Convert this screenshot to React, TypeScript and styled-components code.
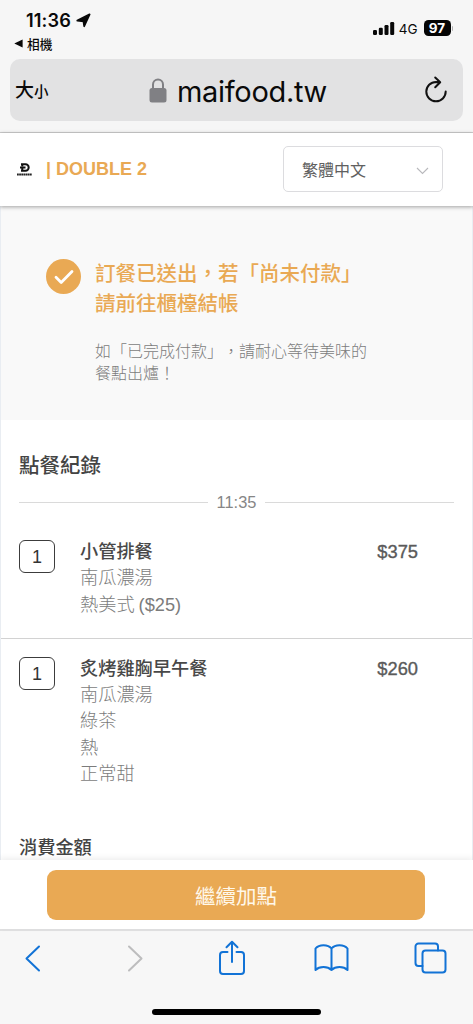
import React from "react";
import styled, { createGlobalStyle } from "styled-components";

const AMBER = "#e9a954";
const BLUE = "#1273d6";
const WEB = '"Liberation Sans", "Noto Sans CJK TC", sans-serif';
const SYSTEM = 'Inter, "Noto Sans CJK TC", sans-serif';

const Global = createGlobalStyle`
  * { box-sizing: border-box; }
  body { margin: 0; background: #f6f6f6; }
`;

const Phone = styled.div`
  width: 473px;
  height: 1024px;
  overflow: hidden;
  display: flex;
  flex-direction: column;
  background: #f6f6f6;
  font-family: ${WEB};
  text-spacing-trim: space-all;
`;

const BrowserTop = styled.header`
  height: 133px;
  flex: none;
  border-bottom: 1px solid #cfcfcf;
  font-family: ${SYSTEM};
  color: #0a0a0a;
`;

const StatusBar = styled.div`
  height: 59px;
  display: flex;
  justify-content: space-between;
  padding: 9px 20px 0 14px;
`;

const Clock = styled.div`
  display: flex;
  align-items: center;
  gap: 5px;
  height: 22px;
  padding-left: 12px;
  font-size: 18.2px;
  font-weight: 600;
  letter-spacing: 0.1px;
`;

const BackToApp = styled.div`
  display: flex;
  align-items: center;
  gap: 4px;
  height: 24px;
  font-size: 12.7px;
  font-weight: 500;
`;

const Signals = styled.div`
  display: flex;
  align-items: center;
  height: 38px;
  font-size: 13.5px;
`;

const Network = styled.span`
  margin: 1px 6px 0 4px;
`;

const Battery = styled.span`
  width: 27px;
  height: 16px;
  border-radius: 4.5px;
  background: #050505;
  color: #fff;
  font-size: 13.5px;
  font-weight: 700;
  line-height: 16px;
  text-align: center;
`;

const BatteryTip = styled.span`
  width: 1.5px;
  height: 5px;
  margin-left: 1px;
  border-radius: 0 2px 2px 0;
  background: #b0b0b0;
`;

const AddressBar = styled.div`
  height: 62px;
  margin: 0 10px;
  padding: 0 15px 0 5px;
  border-radius: 10px;
  background: #e2e2e3;
  display: flex;
  align-items: center;
  justify-content: space-between;
`;

const TextSize = styled.span`
  width: 36px;
  padding-top: 3px;
  font-size: 19px;
  font-weight: 500;
  line-height: 24px;
  white-space: nowrap;
  small { font-size: 14.5px; }
`;

const Domain = styled.div`
  display: flex;
  align-items: center;
  gap: 10px;
  padding: 3px 0 0 1px;
  font-size: 29px;
  letter-spacing: -0.3px;
  line-height: 36px;
  svg { margin-top: -3px; }
`;

const SiteHeader = styled.div`
  position: relative;
  z-index: 1;
  height: 73px;
  flex: none;
  padding: 0 30px 0 15px;
  display: flex;
  align-items: center;
  justify-content: space-between;
  background: #fff;
  box-shadow: 0 1px 4px rgba(0, 0, 0, 0.36);
`;

const Brand = styled.div`
  display: flex;
  align-items: center;
  gap: 12px;
  color: ${AMBER};
  font-size: 18px;
  font-weight: 700;
`;

const LanguageSelect = styled.button`
  width: 160px;
  height: 46px;
  margin-bottom: 1px;
  padding: 3px 13px 0 18px;
  border: 1px solid #dcdcdf;
  border-radius: 5px;
  background: #fff;
  display: flex;
  align-items: center;
  justify-content: space-between;
  color: #606060;
  font: 400 16px/24px ${WEB};
`;

const Page = styled.main`
  flex: 1;
  min-height: 0;
  overflow: hidden;
  background: #fff;
  border: solid #e9edf2;
  border-width: 0 1px;
`;

const Notice = styled.section`
  height: 214px;
  padding: 53px 45px 0 45px;
  display: flex;
  gap: 14px;
  background: #f9f9f9;
`;

const NoticeTitle = styled.h1`
  margin: 0;
  color: ${AMBER};
  font-size: 20.5px;
  font-weight: 500;
  line-height: 30px;
  white-space: nowrap;
`;

const NoticeText = styled.p`
  margin: 22px 0 0;
  color: #7c7c7c;
  font-size: 16px;
  font-weight: 300;
  line-height: 22px;
  white-space: nowrap;
`;

const NoticeIcon = styled.svg`
  flex: none;
`;

const Record = styled.section`
  padding-top: 31px;
`;

const Heading = styled.h2<{ $size: number }>`
  margin: 0 0 0 18px;
  color: #444;
  font-size: ${(p) => p.$size}px;
  font-weight: 500;
  line-height: 30px;
`;

const TimeDivider = styled.div`
  height: 24px;
  margin: 9px 18px 25px;
  display: flex;
  align-items: center;
  gap: 8.5px;
  color: #868686;
  font-size: 16.4px;
  &::before, &::after {
    content: "";
    flex: 1;
    height: 1px;
    background: #dadada;
  }
`;

const Item = styled.article<{ $divided?: boolean }>`
  display: flex;
  align-items: flex-start;
  padding: ${(p) => (p.$divided ? "17px 54px 0 18px" : "0 54px 20px 18px")};
  border-top: ${(p) => (p.$divided ? "1px solid #d2d2d2" : "0")};
`;

const Quantity = styled.span`
  width: 36px;
  height: 33px;
  margin-top: 1px;
  border: 1.5px solid #3c3c3c;
  border-radius: 6px;
  color: #333;
  font-size: 18px;
  line-height: 32px;
  text-align: center;
`;

const Details = styled.div`
  flex: 1;
  margin-left: 25px;
  color: #7c7c7c;
  font-size: 18.2px;
  font-weight: 300;
`;

const Line = styled.div`
  height: 26.3px;
  line-height: 26.3px;
  word-spacing: -1px;
`;

const Name = styled(Line)`
  color: #484848;
  font-weight: 500;
`;

const Price = styled.span`
  color: #5a5a5a;
  font-size: 18.3px;
  line-height: 26px;
  -webkit-text-stroke: 0.35px #5a5a5a;
`;

const Total = styled.section`
  padding-top: 46px;
`;

const ActionBar = styled.div`
  position: relative;
  z-index: 1;
  height: 69px;
  flex: none;
  padding: 10px 48px 0 47px;
  background: #fff;
  box-shadow: 0 -2px 6px rgba(0, 0, 0, 0.07);
`;

const OrderMore = styled.button`
  display: block;
  width: 100%;
  height: 50px;
  border: 0;
  border-radius: 9px;
  background: ${AMBER};
  color: #fff8ea;
  font: 400 20.5px/50px ${WEB};
  padding: 2px 0 0;
`;

const BrowserBottom = styled.footer`
  height: 95px;
  flex: none;
  border-top: 2px solid #e1e1e2;
  background: #f7f7f7;
  display: flex;
  flex-direction: column;
  align-items: center;
`;

const Tools = styled.nav`
  width: 100%;
  height: 54px;
  padding: 0 25px 0 15px;
  display: grid;
  grid-template-columns: repeat(5, 35px);
  align-items: center;
  justify-content: space-between;
  justify-items: center;
`;

const HomeIndicator = styled.div`
  width: 169px;
  height: 6px;
  margin-top: 24px;
  border-radius: 3px;
  background: #000;
`;

const Tool = styled.svg<{ $muted?: boolean }>`
  fill: none;
  stroke: ${(p) => (p.$muted ? "#bdbdbe" : BLUE)};
  margin-left: ${(p) => (p.$muted ? "6px" : "0")};
  stroke-width: 2;
  stroke-linecap: round;
  stroke-linejoin: round;
`;

const LogoMark = styled.span`
  width: 19px;
  display: flex;
  flex-direction: column;
  align-items: center;
  gap: 1px;
`;

const orders = [
  { name: "小管排餐", price: "$375", options: ["南瓜濃湯", "熱美式 ($25)"] },
  { name: "炙烤雞胸早午餐", price: "$260", options: ["南瓜濃湯", "綠茶", "熱", "正常甜"] },
];

export default function App() {
  return (
    <Phone>
      <Global />
      <BrowserTop>
        <StatusBar>
          <div>
            <Clock>
              11:36
              <svg width="15" height="15" viewBox="0 0 15 15">
                <path d="M13.600 1.400 8.200 13.200 7.500 8.300 1.300 7.500z" fill="#080808" stroke="#080808" strokeWidth="1.800" strokeLinejoin="round" />
              </svg>
            </Clock>
            <BackToApp>
              <svg width="9" height="9" viewBox="0 0 9 9"><path d="M.3 4.500 8.600.400v8.200z" fill="#080808" /></svg>
              相機
            </BackToApp>
          </div>
          <Signals>
            <svg width="22" height="13" viewBox="0 0 22 13" fill="#080808">
              <rect x="0" y="8" width="4" height="5" rx="1.200" />
              <rect x="5.800" y="5.700" width="4" height="7.300" rx="1.200" />
              <rect x="11.500" y="3" width="4" height="10" rx="1.200" />
              <rect x="17.200" y="0" width="4" height="13" rx="1.200" />
            </svg>
            <Network>4G</Network>
            <Battery>97</Battery>
            <BatteryTip />
          </Signals>
        </StatusBar>
        <AddressBar>
          <TextSize>大<small>小</small></TextSize>
          <Domain>
            <svg width="18" height="25" viewBox="0 0 18 25">
              <path d="M4 11V6.500a5 5 0 0 1 10 0V11" fill="none" stroke="#808084" strokeWidth="2" />
              <rect x="0.500" y="10" width="17" height="14.500" rx="2.500" fill="#808084" />
            </svg>
            maifood.tw
          </Domain>
          <svg width="24" height="28" viewBox="0 0 24 28" fill="none" stroke="#111" strokeWidth="2" strokeLinecap="round" strokeLinejoin="round">
            <path d="M15.500 6.300 12 5.900a9.700 9.700 0 1 0 9.700 9.700M11.200 1.500l5 4.800-5 5" />
          </svg>
        </AddressBar>
      </BrowserTop>

      <SiteHeader>
        <Brand>
          <LogoMark>
            <svg width="10" height="9" viewBox="0 0 10 9">
              <path d="M1 1.300h4.500a3.200 3.200 0 0 1 0 6.400H1M2.300 1.300v2M2.300 5.500v2M0 4.500h5.500" fill="none" stroke="#111" strokeWidth="2" />
            </svg>
            <svg width="15" height="3" viewBox="0 0 15 3"><path d="M0 1.500h15" stroke="#222" strokeWidth="2" strokeDasharray="1.800 .35" /></svg>
          </LogoMark>
          <span>| DOUBLE 2</span>
        </Brand>
        <LanguageSelect>
          繁體中文
          <svg width="13" height="8" viewBox="0 0 13 8" fill="none" stroke="#b8b8bc" strokeWidth="1.100"><path d="m1 1 5.500 5.500L12 1" /></svg>
        </LanguageSelect>
      </SiteHeader>

      <Page>
        <Notice>
          <NoticeIcon width="35" height="35" viewBox="0 0 35 35">
            <circle cx="17.500" cy="17.500" r="17.500" fill={AMBER} />
            <path d="m10 18.300 5.200 5.200L26 12.500" fill="none" stroke="#fff" strokeWidth="2.800" strokeLinecap="round" strokeLinejoin="round" />
          </NoticeIcon>
          <div>
            <NoticeTitle>訂餐已送出，若「尚未付款」<br />請前往櫃檯結帳</NoticeTitle>
            <NoticeText>如「已完成付款」，請耐心等待美味的<br />餐點出爐！</NoticeText>
          </div>
        </Notice>
        <Record>
          <Heading $size={20.5}>點餐紀錄</Heading>
          <TimeDivider>11:35</TimeDivider>
          {orders.map((order, index) => (
            <Item key={order.name} $divided={index > 0}>
              <Quantity>1</Quantity>
              <Details>
                <Name>{order.name}</Name>
                {order.options.map((option) => <Line key={option}>{option}</Line>)}
              </Details>
              <Price>{order.price}</Price>
            </Item>
          ))}
        </Record>
        <Total>
          <Heading $size={18.2}>消費金額</Heading>
        </Total>
      </Page>

      <ActionBar>
        <OrderMore>繼續加點</OrderMore>
      </ActionBar>

      <BrowserBottom>
        <Tools>
          <Tool width="17" height="28" viewBox="0 0 17 28"><path d="M15 2.500 2.500 14.500 15 26.500" /></Tool>
          <Tool $muted width="17" height="28" viewBox="0 0 17 28"><path d="m2 2.500 12.500 12L2 26.500" /></Tool>
          <Tool width="28" height="36" viewBox="0 0 28 36"><path d="M9.500 12H5a3 3 0 0 0-3 3v16a3 3 0 0 0 3 3h18a3 3 0 0 0 3-3V15a3 3 0 0 0-3-3H18.500M14 22V2M8.500 7.300 14 1.800l5.500 5.500" /></Tool>
          <Tool width="35" height="30" viewBox="0 0 35 30"><path d="M17.500 5.500C14 1 5 1 1.500 5.500V27c4-4 12-4 16 0 4-4 12-4 16 0V5.500C30 1 21 1 17.500 5.500V27" /></Tool>
          <Tool width="33" height="32" viewBox="0 0 33 32"><path d="M8.500 24H4.500a3 3 0 0 1-3-3V4.500a3 3 0 0 1 3-3H21a3 3 0 0 1 3 3V8.500" /><rect x="8.500" y="8.500" width="23" height="22" rx="3" /></Tool>
        </Tools>
        <HomeIndicator />
      </BrowserBottom>
    </Phone>
  );
}
